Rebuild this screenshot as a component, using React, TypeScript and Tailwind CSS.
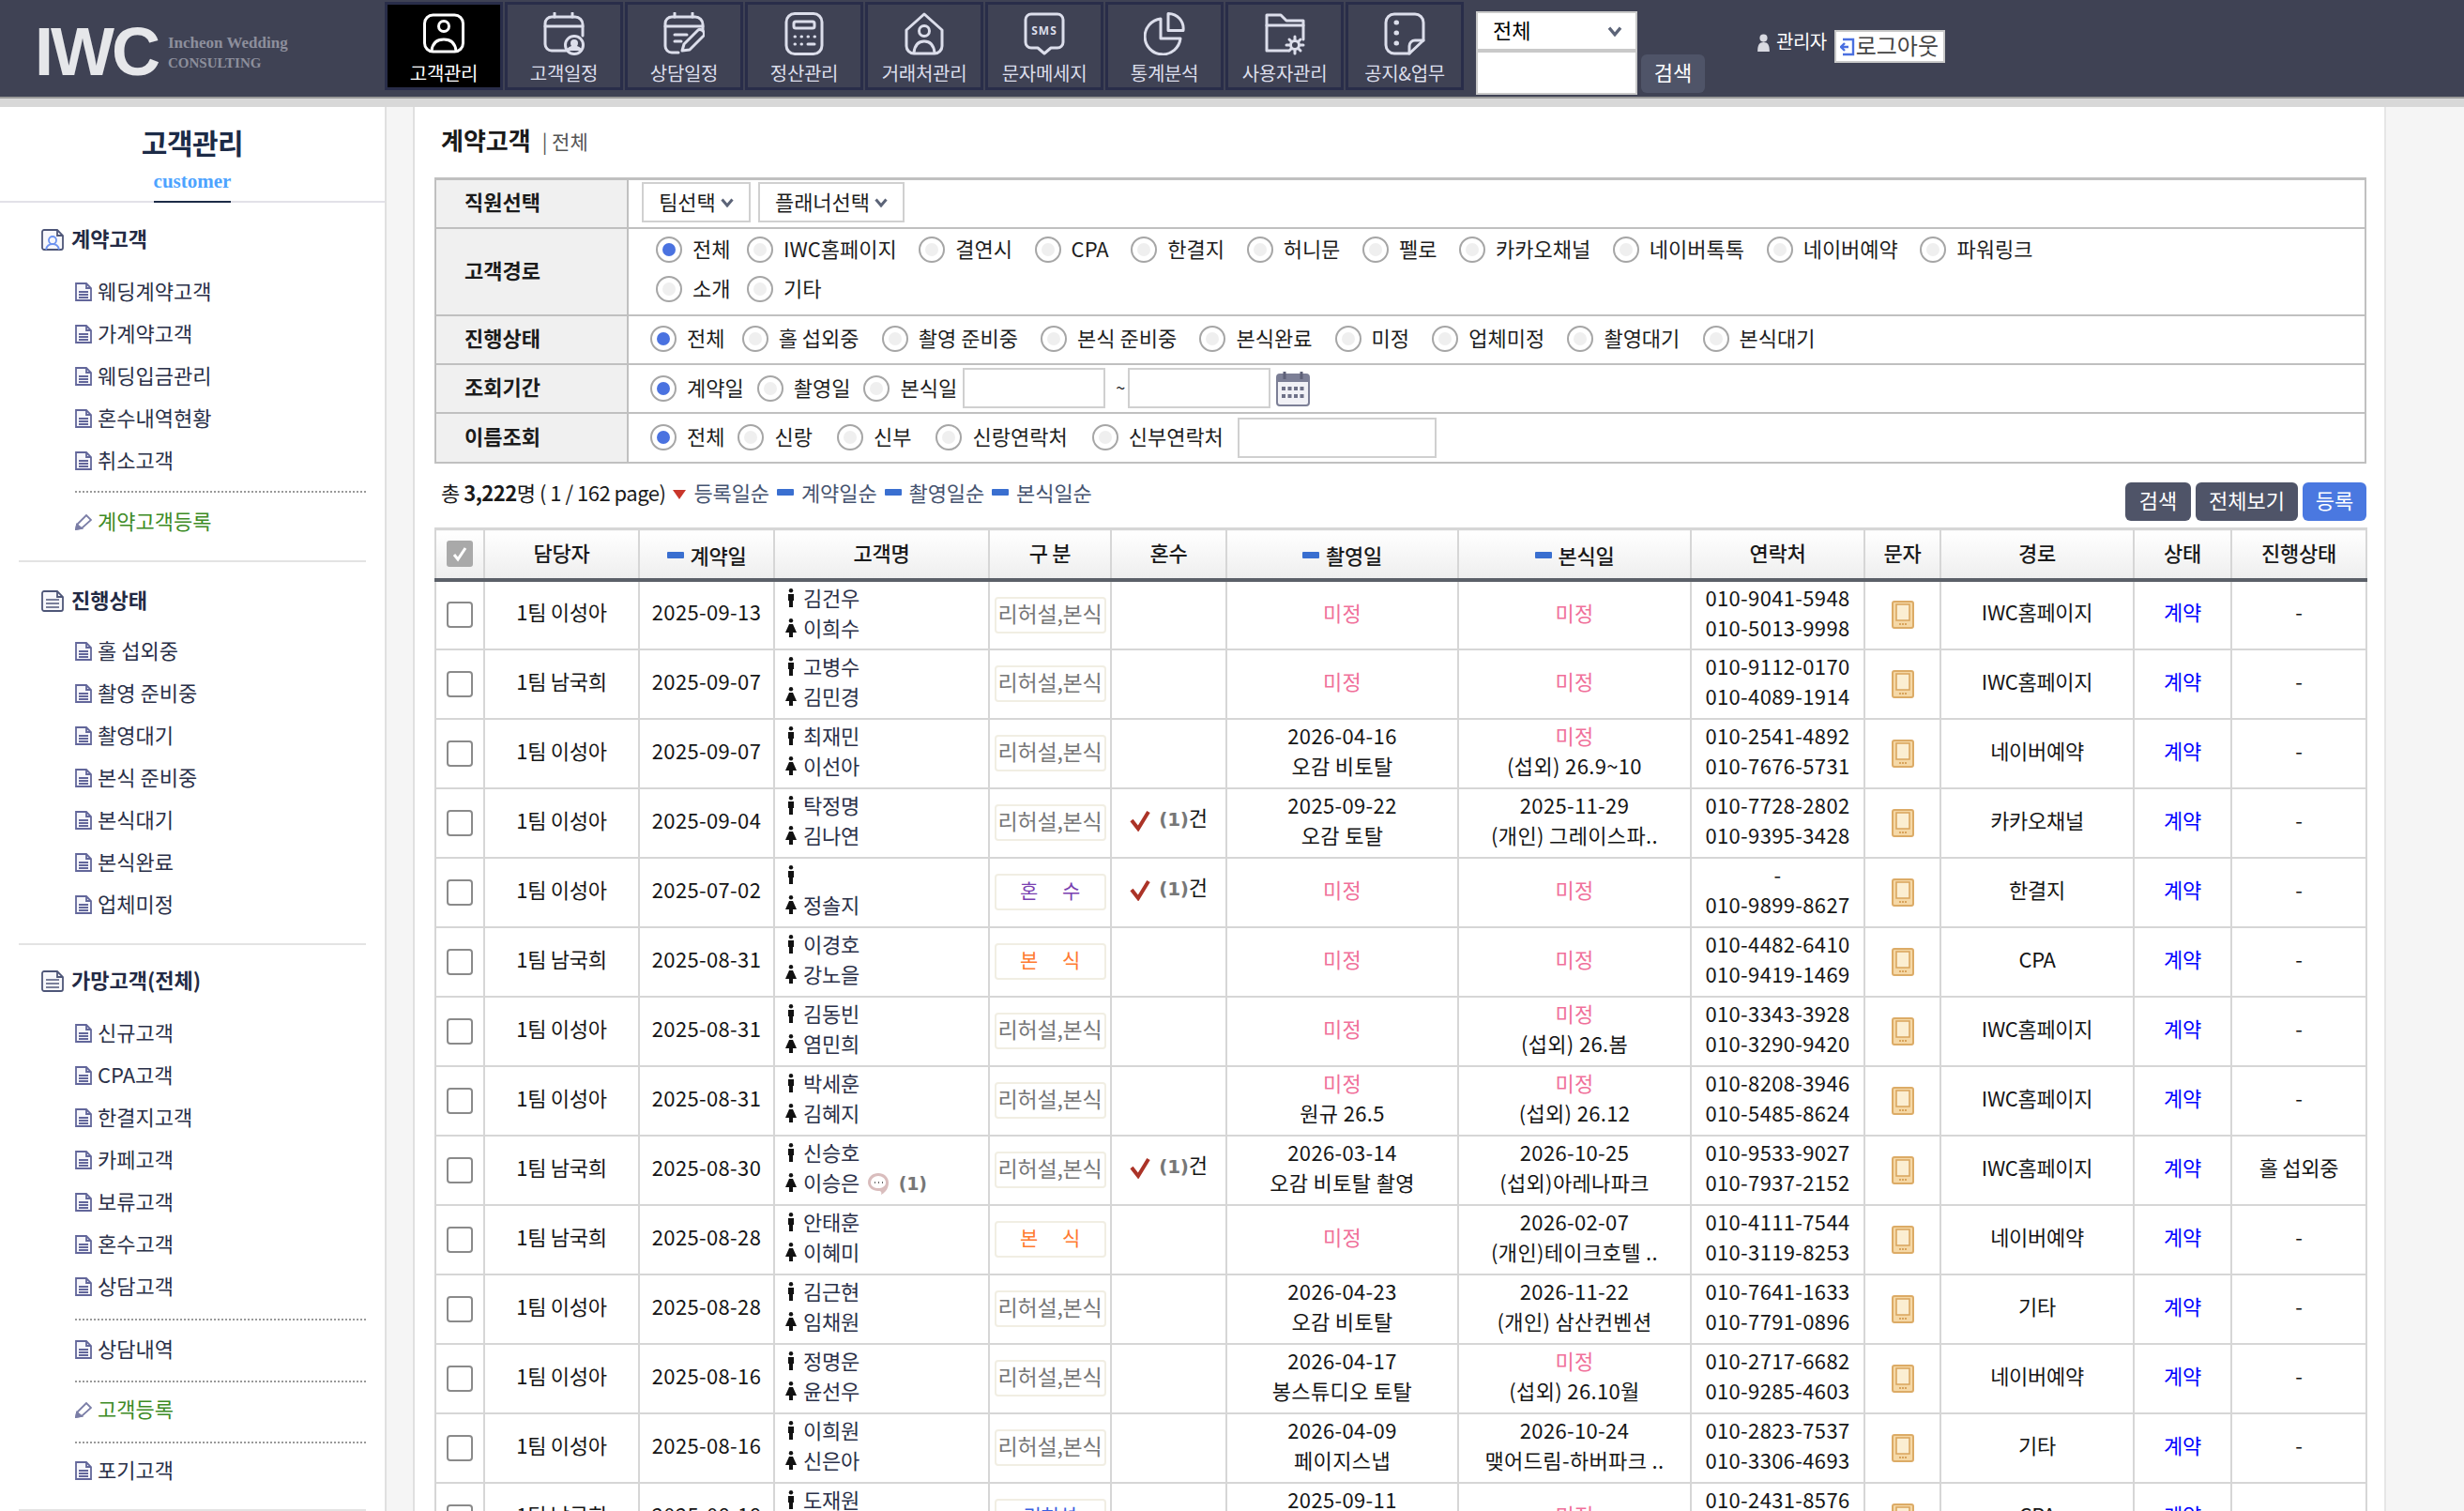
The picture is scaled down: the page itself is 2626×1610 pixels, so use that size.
import React from "react";

const stroke = { fill: "none", stroke: "currentColor", strokeWidth: 3, strokeLinecap: "round" as const, strokeLinejoin: "round" as const };

function NavIcon({ k }: { k: number }) {
  return (
    <svg viewBox="0 0 44 46" className="w-[44px] h-[46px]" {...stroke}>
      {k === 0 && (<g><rect x="1.5" y="3" width="41" height="39" rx="9" /><circle cx="22" cy="15" r="5.5" /><path d="M9 41c1-8 6-12 13-12s12 4 13 12" /></g>)}
      {k === 1 && (<g><path d="M24 41H9a7 7 0 0 1-7-7V12a7 7 0 0 1 7-7h25a8 8 0 0 1 8 8v12" /><path d="M2 15h40M12 1v4M31 1v4" /><circle cx="33" cy="35" r="9.5" /><circle cx="33" cy="33" r="2.5" fill="currentColor" /><path d="M26 41c2-5 12-5 14 0" fill="currentColor" /></g>)}
      {k === 2 && (<g><path d="M16 43H9a7 7 0 0 1-7-7V12a7 7 0 0 1 7-7h25a8 8 0 0 1 8 8v6" /><path d="M2 15h40M12 1v4M31 1v4M12 24h13M12 31h7" /><path d="M20 41l2-7 15-15c3-2 8 2 6 6L28 40z" /></g>)}
      {k === 3 && (<g><rect x="3" y="1.5" width="38" height="43" rx="9" /><rect x="11" y="10" width="22" height="7" rx="2" /><path d="M12 26h.5M19 26h.5M26 26h.5M33 26h.5M12 34h.5M19 34h.5M26 34h7" /></g>)}
      {k === 4 && (<g><path d="M3 19 22 2l19 17v17a8 8 0 0 1-8 8H11a8 8 0 0 1-8-8z" /><circle cx="22" cy="20" r="5.5" /><path d="M11 43c1-8 5-12 11-12s10 4 11 12" /></g>)}
      {k === 5 && (<g><path d="M8 2h28a6 6 0 0 1 6 6v24a6 6 0 0 1-6 6h-7l-7 6-7-6H8a6 6 0 0 1-6-6V8a6 6 0 0 1 6-6z" /><text x="22" y="24" textAnchor="middle" fontSize="12" fontWeight="700" fill="currentColor" stroke="none" letterSpacing="1" fontFamily="Noto Sans">SMS</text></g>)}
      {k === 6 && (<g><path d="M18 7a19 19 0 1 0 21 21H18z" /><path d="M26 1.5a16 16 0 0 1 16 18H26z" /></g>)}
      {k === 7 && (<g><path d="M26 41H3V3h15l6 6h18v20" /><path d="M3 14h39" /><circle cx="33" cy="35" r="4.5" /><path d="M33 26v3M33 41v3M24 35h3M39 35h3M27 29l2 2M37 39l2 2M39 29l-2 2M29 39l-2 2" /></g>)}
      {k === 8 && (<g><path d="M27 44H11a9 9 0 0 1-9-9V11a9 9 0 0 1 9-9h22a9 9 0 0 1 9 9v19z" /><path d="M27 44v-8a6 6 0 0 1 6-6h9" /><path d="M13 11h.5M13 22h.5M13 33h.5" strokeWidth="5" /></g>)}
    </svg>
  );
}

const navs = ["고객관리", "고객일정", "상담일정", "정산관리", "거래처관리", "문자메세지", "통계분석", "사용자관리", "공지&업무"];

function Chevron({ className }: { className: string }) {
  return (
    <svg viewBox="0 0 14 10" className={className} fill="none" stroke="#5c6478" strokeWidth="3">
      <path d="M1.5 1.5 7 8l5.5-6.5" />
    </svg>
  );
}

function Header() {
  return (
    <header className="h-[105px] bg-[#3f4254] border-b-[2px] border-[#9a9a9a] flex items-start shrink-0">
      <div className="w-[410px] h-[103px] flex items-center pl-[37px] gap-[11px] shrink-0">
        <span className="text-[72px] leading-none font-bold text-[#e6e7ea] tracking-[-3px] font-['Liberation_Sans',sans-serif] mt-[6px]">IWC</span>
        <div className="flex flex-col font-['Liberation_Serif',serif] text-[#8d8f9c] mt-[8px]">
          <span className="text-[17px] leading-[22px] font-bold">Incheon Wedding</span>
          <span className="text-[15px] leading-[20px] font-bold">CONSULTING</span>
        </div>
      </div>
      <nav className="flex gap-[2px] pt-[2px] shrink-0">
        {navs.map((n, i) => (
          <div key={n} className={`w-[126px] h-[94px] border-[3px] border-[#292d49] flex flex-col items-center pt-[8px] ${i === 0 ? "bg-black text-white" : "text-[#dcdeeb]"}`}>
            <NavIcon k={i} />
            <span className="text-[20px] leading-[28px] mt-[5px] tracking-[-0.3px] whitespace-nowrap">{n}</span>
          </div>
        ))}
      </nav>
      <div className="ml-[13px] mt-[12px] w-[172px] shrink-0 flex flex-col">
        <div className="h-[44px] bg-white border-[2px] border-b-[4px] border-[#c9c9c9] flex items-center justify-between pl-[16px] pr-[14px] text-[22px] text-black">
          <span className="pb-[4px]">전체</span>
          <Chevron className="w-[16px] h-[11px]" />
        </div>
        <div className="h-[45px] bg-white border-[2px] border-t-0 border-[#c9c9c9]" />
      </div>
      <button className="ml-[4px] mt-[58px] w-[68px] h-[41px] rounded-[6px] bg-[#4f5468] text-[22px] text-white shrink-0 pb-[4px]">검색</button>
      <div className="ml-[55px] mt-[32px] flex items-start shrink-0">
        <div className="flex items-center -mt-[2px]">
          <svg viewBox="0 0 16 22" className="w-[15px] h-[20px] mr-[6px]" fill="#d9dae2"><circle cx="8" cy="5" r="4.5" /><path d="M1 21c0-8 2-11 7-11s7 3 7 11z" /></svg>
          <span className="text-[20px] leading-[28px] text-white tracking-[-0.5px] pb-[3px]">관리자</span>
        </div>
        <div className="ml-[8px] w-[118px] h-[35px] bg-white border-[2px] border-[#c9c9c9] flex items-center pl-[4px] text-[24px] text-[#444]">
          <svg viewBox="0 0 16 20" className="w-[16px] h-[20px] mr-[1px] shrink-0" fill="none" stroke="#4a6fe0" strokeWidth="2.4"><path d="M3 2h11v16H3M1 10h8M5 6l-4 4 4 4" /></svg>
          <span className="whitespace-nowrap leading-[30px] pb-[3px]">로그아웃</span>
        </div>
      </div>
    </header>
  );
}

function DocIcon() {
  return (
    <svg viewBox="0 0 18 20" className="w-[18px] h-[20px] shrink-0 mt-[3px]" fill="none" stroke="#62669a" strokeWidth="1.8">
      <path d="M1 1h11l5 5v13H1z" fill="#f6f6fb" />
      <path d="M12 1v5h5M4 10h10M4 13h10M4 16h10" />
    </svg>
  );
}
function PenIcon() {
  return (
    <svg viewBox="0 0 18 20" className="w-[18px] h-[20px] shrink-0 mt-[3px]" fill="none" stroke="#7a7da6" strokeWidth="1.8">
      <path d="M1 18l1-5L12 3l5 5L7 17z" />
      <path d="M1 18l1-5 5 4z" fill="#7a7da6" />
    </svg>
  );
}
function HeadIcon({ person }: { person?: boolean }) {
  return (
    <svg viewBox="0 0 24 24" className="w-[24px] h-[24px] shrink-0 mt-[3px]" fill="none" stroke="#4e5678" strokeWidth="1.8">
      <path d="M3 2h14l6 6v13a2 2 0 0 1-2 2H3a2 2 0 0 1-2-2V4a2 2 0 0 1 2-2z" fill="#f7f7fb" />
      <path d="M17 2v6h6" />
      {person ? (
        <g stroke="#6d93f0"><circle cx="12" cy="13" r="4" /><path d="M5 23c1-5 4-6 7-6s6 1 7 6" /></g>
      ) : (
        <path d="M5 11h14M5 15h14M5 19h14" stroke="#7a7f9a" />
      )}
    </svg>
  );
}

function SideItem({ label }: { label: string }) {
  return (
    <li className="h-[45px] flex items-center pl-[80px] gap-[6px] text-[22px] text-[#2a3048] whitespace-nowrap">
      <DocIcon />
      <span>{label}</span>
    </li>
  );
}
function SideGreen({ label }: { label: string }) {
  return (
    <li className="h-[45px] flex items-center pl-[80px] gap-[6px] text-[22px] text-[#3d8b25] whitespace-nowrap">
      <PenIcon />
      <span>{label}</span>
    </li>
  );
}
function Dotted() {
  return <li className="ml-[80px] mr-[20px] border-t-[2px] border-dotted border-[#9a9a9a] h-0" />;
}
function SideHead({ label, person }: { label: string; person?: boolean }) {
  return (
    <div className="flex items-center pl-[44px] gap-[8px] h-[30px] text-[22px] font-bold text-[#232a44]">
      <HeadIcon person={person} />
      <span>{label}</span>
    </div>
  );
}

function Sidebar() {
  return (
    <aside className="w-[410px] shrink-0 bg-white">
      <div className="h-[102px] border-b-[2px] border-[#e2e1e8] flex flex-col items-center pt-[15px] relative">
        <span className="text-[30px] leading-[44px] font-bold text-[#1c2b47] tracking-[-0.5px]">고객관리</span>
        <span className="mt-[8px] text-[21px] leading-[24px] font-bold text-[#4da3ff] font-['Liberation_Serif',serif]">customer</span>
        <span className="absolute left-[164px] -bottom-[2px] w-[82px] h-[2px] bg-[#1c2b47]" />
      </div>
      <div className="pt-[22px]">
        <SideHead label="계약고객" person />
        <ul className="pt-[19px]">
          {["웨딩계약고객", "가계약고객", "웨딩입금관리", "혼수내역현황", "취소고객"].map((s) => <SideItem key={s} label={s} />)}
          <li className="h-[11px]" />
          <Dotted />
          <li className="h-[7px]" />
          <SideGreen label="계약고객등록" />
        </ul>
        <div className="mx-[20px] mt-[20px] border-t-[2px] border-[#e3e3e3]" />
      </div>
      <div className="pt-[24px]">
        <SideHead label="진행상태" />
        <ul className="pt-[17px]">
          {["홀 섭외중", "촬영 준비중", "촬영대기", "본식 준비중", "본식대기", "본식완료", "업체미정"].map((s) => <SideItem key={s} label={s} />)}
        </ul>
        <div className="mx-[20px] mt-[20px] border-t-[2px] border-[#e3e3e3]" />
      </div>
      <div className="pt-[21px]">
        <SideHead label="가망고객(전체)" />
        <ul className="pt-[19px]">
          {["신규고객", "CPA고객", "한결지고객", "카페고객", "보류고객", "혼수고객", "상담고객"].map((s) => <SideItem key={s} label={s} />)}
          <li className="h-[13px]" />
          <Dotted />
          <li className="h-[7px]" />
          <SideItem label="상담내역" />
          <li className="h-[12px]" />
          <Dotted />
          <li className="h-[5px]" />
          <SideGreen label="고객등록" />
          <li className="h-[13px]" />
          <Dotted />
          <li className="h-[5px]" />
          <SideItem label="포기고객" />
        </ul>
        <div className="mx-[20px] mt-[20px] border-t-[2px] border-[#e3e3e3]" />
      </div>
    </aside>
  );
}

function Radio({ label, checked, className }: { label: string; checked?: boolean; className?: string }) {
  return (
    <span className={`flex items-center gap-[11px] whitespace-nowrap ${className ?? ""}`}>
      <span className="w-[28px] h-[28px] rounded-full border-[2px] border-[#a6a6a6] bg-white flex items-center justify-center shrink-0">
        <span className={`w-[14px] h-[14px] rounded-full ${checked ? "bg-[#4a72e0]" : "bg-[#efefef]"}`} />
      </span>
      <span className="pb-[3px]">{label}</span>
    </span>
  );
}

function FormRow({ label, h, children }: { label: string; h: string; children: React.ReactNode }) {
  return (
    <div className={`flex border-b-[2px] border-[#c0c0c0] ${h}`}>
      <div className="w-[205px] shrink-0 bg-[#f0f0f0] border-r-[2px] border-[#c0c0c0] flex items-center pl-[30px] text-[22px] font-bold text-[#1b1b1b] pb-[5px]">{label}</div>
      <div className="flex-1 min-w-0 text-[22px] text-[#1d1d1d]">{children}</div>
    </div>
  );
}

function SelectBox({ label, w }: { label: string; w: string }) {
  return (
    <div className={`${w} h-[43px] border-[2px] border-[#d0d0d0] flex items-center justify-center gap-[5px] text-[22px] text-[#1d1d1d]`}>
      <span className="pb-[3px]">{label}</span>
      <Chevron className="w-[14px] h-[10px]" />
    </div>
  );
}

function SearchForm() {
  const routes = ["IWC홈페이지", "결연시", "CPA", "한결지", "허니문", "펠로", "카카오채널", "네이버톡톡", "네이버예약", "파워링크"];
  const status = ["홀 섭외중", "촬영 준비중", "본식 준비중", "본식완료", "미정", "업체미정", "촬영대기", "본식대기"];
  return (
    <div className="border-[2px] border-t-[3px] border-b-0 border-[#c0c0c0]">
      <FormRow label="직원선택" h="h-[52px]">
        <div className="h-full flex items-center pl-[14px] gap-[8px] pb-[3px]">
          <SelectBox label="팀선택" w="w-[116px]" />
          <SelectBox label="플래너선택" w="w-[156px]" />
        </div>
      </FormRow>
      <FormRow label="고객경로" h="h-[93px]">
        <div className="pl-[29px] pt-[8px]">
          <div className="flex items-center gap-[23.6px] h-[28px]">
            <Radio label="전체" checked className="-mr-[6px]" />
            {routes.map((r) => <Radio key={r} label={r} />)}
          </div>
          <div className="flex items-center gap-[23.6px] h-[28px] mt-[14px]">
            <Radio label="소개" className="-mr-[6px]" />
            <Radio label="기타" />
          </div>
        </div>
      </FormRow>
      <FormRow label="진행상태" h="h-[52px]">
        <div className="h-full flex items-center pl-[23px] gap-[24.2px] pb-[3px]">
          <Radio label="전체" checked className="-mr-[6px]" />
          {status.map((r) => <Radio key={r} label={r} />)}
        </div>
      </FormRow>
      <FormRow label="조회기간" h="h-[52px]">
        <div className="h-full flex items-center pl-[23px] gap-[14px] pb-[1px]">
          <Radio label="계약일" checked />
          <Radio label="촬영일" />
          <Radio label="본식일" />
          <div className="w-[152px] h-[43px] border-[2px] border-[#d0d0d0] -ml-[8px]" />
          <span className="-mx-[3px] text-[18px] pb-[3px]">~</span>
          <div className="w-[152px] h-[43px] border-[2px] border-[#d0d0d0] -ml-[8px]" />
          <svg viewBox="0 0 36 38" className="w-[36px] h-[38px] -ml-[8px]">
            <rect x="1" y="4" width="34" height="33" rx="3" fill="#f1f1f6" stroke="#7c7f96" strokeWidth="2" />
            <path d="M1 12V7a3 3 0 0 1 3-3h28a3 3 0 0 1 3 3v5z" fill="#7c7f96" />
            <path d="M9 1v8M27 1v8" stroke="#5e6178" strokeWidth="3" />
            <path d="M6 19h24M6 27h24" stroke="#6e7188" strokeWidth="4" strokeDasharray="4 2.5" />
          </svg>
        </div>
      </FormRow>
      <FormRow label="이름조회" h="h-[53px]">
        <div className="h-full flex items-center pl-[23px] gap-[26px] pb-[1px]">
          <Radio label="전체" checked className="-mr-[12px]" />
          <Radio label="신랑" />
          <Radio label="신부" />
          <Radio label="신랑연락처" />
          <Radio label="신부연락처" />
          <div className="w-[212px] h-[43px] border-[2px] border-[#d0d0d0] -ml-[11px]" />
        </div>
      </FormRow>
    </div>
  );
}

function Dash() {
  return <span className="inline-block w-[18px] h-[7px] bg-[#3a6fd0] rounded-[1px] shrink-0" />;
}

function SummaryBar() {
  return (
    <div className="h-[68px] flex items-start justify-between">
      <div className="flex items-center gap-[8px] text-[22px] text-[#45536f] pt-[14px] pl-[7px] whitespace-nowrap tracking-[-0.1px]">
        <span className="text-[#1a1a1a] tracking-[-0.5px]">총 <b>3,222</b>명 ( 1 / 162 page)</span>
        <svg viewBox="0 0 14 10" className="w-[14px] h-[10px] shrink-0 mt-[4px]"><path d="M0 0h14L7 10z" fill="#c9362b" /></svg>
        <span>등록일순</span><Dash /><span>계약일순</span><Dash /><span>촬영일순</span><Dash /><span>본식일순</span>
      </div>
      <div className="flex gap-[5px] pt-[20px] text-[22px] text-white">
        <button className="w-[70px] h-[41px] rounded-[6px] bg-[#4f5468] pb-[4px]">검색</button>
        <button className="w-[109px] h-[41px] rounded-[6px] bg-[#4f5468] pb-[4px]">전체보기</button>
        <button className="w-[68px] h-[41px] rounded-[6px] bg-[#4a78e0] pb-[4px]">등록</button>
      </div>
    </div>
  );
}

function Male() {
  return (
    <svg viewBox="0 0 10 20" className="w-[10px] h-[22px] shrink-0 mt-[2px]">
      <circle cx="5" cy="2.2" r="2.2" fill="#111" />
      <path d="M2 6h6v7H7v7H3v-7H2z" fill="#111" />
    </svg>
  );
}
function Female() {
  return (
    <svg viewBox="0 0 14 20" className="w-[14px] h-[22px] shrink-0 -mx-[2px] mt-[2px]">
      <circle cx="7" cy="2.2" r="2.2" fill="#111" />
      <path d="M5 6h4l4 9H9v5H5v-5H1z" fill="#111" />
    </svg>
  );
}

type Row = { t: string; d: string; m: string; f: string; chat?: boolean; k: "r" | "h" | "b" | "s"; chk?: boolean; a: string[]; b: string[]; p: string[]; w: string; st?: string };

const R = "리허설,본식";
const rows: Row[] = [
  { t: "1팀 이성아", d: "2025-09-13", m: "김건우", f: "이희수", k: "r", a: ["미정"], b: ["미정"], p: ["010-9041-5948", "010-5013-9998"], w: "IWC홈페이지" },
  { t: "1팀 남국희", d: "2025-09-07", m: "고병수", f: "김민경", k: "r", a: ["미정"], b: ["미정"], p: ["010-9112-0170", "010-4089-1914"], w: "IWC홈페이지" },
  { t: "1팀 이성아", d: "2025-09-07", m: "최재민", f: "이선아", k: "r", a: ["2026-04-16", "오감 비토탈"], b: ["미정", "(섭외) 26.9~10"], p: ["010-2541-4892", "010-7676-5731"], w: "네이버예약" },
  { t: "1팀 이성아", d: "2025-09-04", m: "탁정명", f: "김나연", k: "r", chk: true, a: ["2025-09-22", "오감 토탈"], b: ["2025-11-29", "(개인) 그레이스파.."], p: ["010-7728-2802", "010-9395-3428"], w: "카카오채널" },
  { t: "1팀 이성아", d: "2025-07-02", m: "", f: "정솔지", k: "h", chk: true, a: ["미정"], b: ["미정"], p: ["-", "010-9899-8627"], w: "한결지" },
  { t: "1팀 남국희", d: "2025-08-31", m: "이경호", f: "강노을", k: "b", a: ["미정"], b: ["미정"], p: ["010-4482-6410", "010-9419-1469"], w: "CPA" },
  { t: "1팀 이성아", d: "2025-08-31", m: "김동빈", f: "염민희", k: "r", a: ["미정"], b: ["미정", "(섭외) 26.봄"], p: ["010-3343-3928", "010-3290-9420"], w: "IWC홈페이지" },
  { t: "1팀 이성아", d: "2025-08-31", m: "박세훈", f: "김혜지", k: "r", a: ["미정", "원규 26.5"], b: ["미정", "(섭외) 26.12"], p: ["010-8208-3946", "010-5485-8624"], w: "IWC홈페이지" },
  { t: "1팀 남국희", d: "2025-08-30", m: "신승호", f: "이승은", chat: true, k: "r", chk: true, a: ["2026-03-14", "오감 비토탈 촬영"], b: ["2026-10-25", "(섭외)아레나파크"], p: ["010-9533-9027", "010-7937-2152"], w: "IWC홈페이지", st: "홀 섭외중" },
  { t: "1팀 남국희", d: "2025-08-28", m: "안태훈", f: "이혜미", k: "b", a: ["미정"], b: ["2026-02-07", "(개인)테이크호텔 .."], p: ["010-4111-7544", "010-3119-8253"], w: "네이버예약" },
  { t: "1팀 이성아", d: "2025-08-28", m: "김근현", f: "임채원", k: "r", a: ["2026-04-23", "오감 비토탈"], b: ["2026-11-22", "(개인) 삼산컨벤션"], p: ["010-7641-1633", "010-7791-0896"], w: "기타" },
  { t: "1팀 이성아", d: "2025-08-16", m: "정명운", f: "윤선우", k: "r", a: ["2026-04-17", "봉스튜디오 토탈"], b: ["미정", "(섭외) 26.10월"], p: ["010-2717-6682", "010-9285-4603"], w: "네이버예약" },
  { t: "1팀 이성아", d: "2025-08-16", m: "이희원", f: "신은아", k: "r", a: ["2026-04-09", "페이지스냅"], b: ["2026-10-24", "맺어드림-하버파크 .."], p: ["010-2823-7537", "010-3306-4693"], w: "기타" },
  { t: "1팀 남국희", d: "2025-08-18", m: "도재원", f: "\u00a0", k: "s", a: ["2025-09-11", "\u00a0"], b: ["미정"], p: ["010-2431-8576", "\u00a0"], w: "CPA" },
];

function Kind({ k }: { k: Row["k"] }) {
  const box = "mx-auto w-[119px] h-[39px] mt-[16px] border-[2px] border-[#f1eee3] rounded-[4px] flex items-center justify-center whitespace-nowrap pb-[3px]";
  if (k === "h") return <div className={`${box} text-[21px] text-[#7a3fb0] gap-[26px]`}><span>혼</span><span>수</span></div>;
  if (k === "b") return <div className={`${box} text-[21px] text-[#ff7a30] gap-[26px]`}><span>본</span><span>식</span></div>;
  if (k === "s") return <div className={`${box} text-[21px] text-[#3a5fe0]`}>리허설</div>;
  return <div className={`${box} text-[23px] text-[#777777] tracking-[-0.2px]`}>{R}</div>;
}

const cell = "border-[2px] border-[#d6d6d6] pb-[7px]";

function DateCell({ lines }: { lines: string[] }) {
  return (
    <td className={`${cell} text-center leading-[32px] whitespace-nowrap tracking-[0.35px]`}>
      {lines.map((l, i) => (
        <div key={i} className={l === "미정" ? "text-[#f0709a]" : ""}>{l}</div>
      ))}
    </td>
  );
}

function Th({ children, sort }: { children: React.ReactNode; sort?: boolean }) {
  return (
    <th className="border-x-[2px] border-t-[3px] border-b-[4px] border-x-[#d6d6d6] border-t-[#d6d6d6] border-b-[#5b6068] font-medium text-[#1a1a1a] bg-gradient-to-b from-white to-[#eeeeee] text-center pb-[4px]">
      <span className="inline-flex items-center gap-[7px]">
        {sort && <Dash />}
        {children}
      </span>
    </th>
  );
}

function DataTable() {
  const widths = ["w-[52px]", "w-[165px]", "w-[144px]", "w-[229px]", "w-[130px]", "w-[123px]", "w-[247px]", "w-[248px]", "w-[185px]", "w-[81px]", "w-[206px]", "w-[104px]", "w-[144px]"];
  return (
    <table className="table-fixed border-collapse w-[2058px] text-[22px] text-[#151515] tracking-[-0.3px]">
      <colgroup>{widths.map((w) => <col key={w} className={w} />)}</colgroup>
      <thead>
        <tr className="h-[54px]">
          <th className="border-x-[2px] border-t-[3px] border-b-[4px] border-x-[#d6d6d6] border-t-[#d6d6d6] border-b-[#5b6068] bg-gradient-to-b from-white to-[#eeeeee]">
            <span className="w-[28px] h-[28px] mx-auto rounded-[3px] bg-[#a9a9a9] flex items-center justify-center">
              <svg viewBox="0 0 20 20" className="w-[20px] h-[20px]" fill="none" stroke="#fff" strokeWidth="3"><path d="M4 11l4 5 8-12" /></svg>
            </span>
          </th>
          <Th>담당자</Th>
          <Th sort>계약일</Th>
          <Th>고객명</Th>
          <Th>구 분</Th>
          <Th>혼수</Th>
          <Th sort>촬영일</Th>
          <Th sort>본식일</Th>
          <Th>연락처</Th>
          <Th>문자</Th>
          <Th>경로</Th>
          <Th>상태</Th>
          <Th>진행상태</Th>
        </tr>
      </thead>
      <tbody>
        {rows.map((r, i) => (
          <tr key={i} className="h-[74px]">
            <td className="border-[2px] border-[#d6d6d6]">
              <span className="block mx-auto w-[28px] h-[28px] rounded-[4px] border-[2px] border-[#8a8a8a] bg-white" />
            </td>
            <td className={`${cell} text-center whitespace-nowrap`}>{r.t}</td>
            <td className={`${cell} text-center whitespace-nowrap tracking-[0.35px]`}>{r.d}</td>
            <td className={`${cell} pl-[12px] leading-[32px] text-[#2a3048] whitespace-nowrap`}>
              <div className="flex items-center gap-[8px] h-[32px]"><Male /><span>{r.m}</span></div>
              <div className="flex items-center gap-[8px] h-[32px]">
                {r.f !== "\u00a0" && <Female />}<span>{r.f}</span>
                {r.chat && (
                  <span className="flex items-center gap-[10px] mt-[4px]">
                    <svg viewBox="0 0 24 26" className="w-[24px] h-[26px]"><path d="M12 2c6 0 11 4 11 10 0 7-4 11-8 13 1-3 0-4-3-4C6 21 1 17 1 12 1 6 6 2 12 2z" fill="#d9bdbd" /><path d="M12 5c4 0 8 3 8 7s-4 6-8 6-8-2-8-6 4-7 8-7z" fill="#fff" /><path d="M8 12h1M12 12h1M16 12h1" stroke="#666" strokeWidth="2" /></svg>
                    <b className="text-[19px] text-[#777] font-['DejaVu_Sans',sans-serif]">(1)</b>
                  </span>
                )}
              </div>
            </td>
            <td className="border-[2px] border-[#d6d6d6] align-top"><Kind k={r.k} /></td>
            <td className={`${cell} text-center whitespace-nowrap`}>
              {r.chk && (
                <span className="inline-flex items-center gap-[9px]">
                  <svg viewBox="0 0 22 24" className="w-[22px] h-[24px] mt-[6px]" fill="none" stroke="#ab3327" strokeWidth="4"><path d="M2 12l7 9L20 3" /></svg>
                  <span><b className="text-[20px] text-[#777] font-['DejaVu_Sans',sans-serif]">(1)</b>건</span>
                </span>
              )}
            </td>
            <DateCell lines={r.a} />
            <DateCell lines={r.b} />
            <td className={`${cell} text-center leading-[32px] whitespace-nowrap tracking-[0.35px]`}>
              {r.p.map((x, j) => <div key={j}>{x}</div>)}
            </td>
            <td className="border-[2px] border-[#d6d6d6]">
              <svg viewBox="0 0 24 30" className="w-[24px] h-[30px] mx-auto">
                <rect x="1" y="1" width="22" height="28" rx="2" fill="#f5d8a6" stroke="#dcab66" strokeWidth="2" />
                <rect x="5" y="4" width="14" height="17" fill="#fbeed2" stroke="#d9a45c" strokeWidth="1.5" />
                <path d="M8 25h8" stroke="#d9a45c" strokeWidth="2" strokeDasharray="2 1" />
              </svg>
            </td>
            <td className={`${cell} text-center whitespace-nowrap`}>{r.w}</td>
            <td className={`${cell} text-center text-[#0000ff]`}>계약</td>
            <td className={`${cell} text-center whitespace-nowrap`}>{r.st ?? "-"}</td>
          </tr>
        ))}
      </tbody>
    </table>
  );
}

export default function App() {
  return (
    <div className="w-[2626px] h-[1610px] overflow-hidden flex flex-col bg-[#f5f5f5] font-['Noto_Sans_CJK_KR','Noto_Sans',sans-serif]">
      <Header />
      <div className="h-[9px] bg-[#d8d8d8] shrink-0" />
      <div className="flex flex-1 min-h-0 items-start">
        <Sidebar />
        <div className="w-[32px] self-stretch shrink-0 border-x-[2px] border-[#e0e0e0] bg-[#f5f5f5]" />
        <main className="w-[2101px] self-stretch shrink-0 bg-white border-r-[2px] border-[#e6e6e6] pl-[21px] pr-[19px]">
          <div className="h-[75px] flex items-center pb-[6px] whitespace-nowrap">
            <span className="text-[26px] font-bold text-[#1a1a1a] ml-[7px]">계약고객</span>
            <span className="ml-[12px] text-[21px] text-[#555] mt-[4px]">| 전체</span>
          </div>
          <SearchForm />
          <SummaryBar />
          <DataTable />
        </main>
      </div>
    </div>
  );
}
